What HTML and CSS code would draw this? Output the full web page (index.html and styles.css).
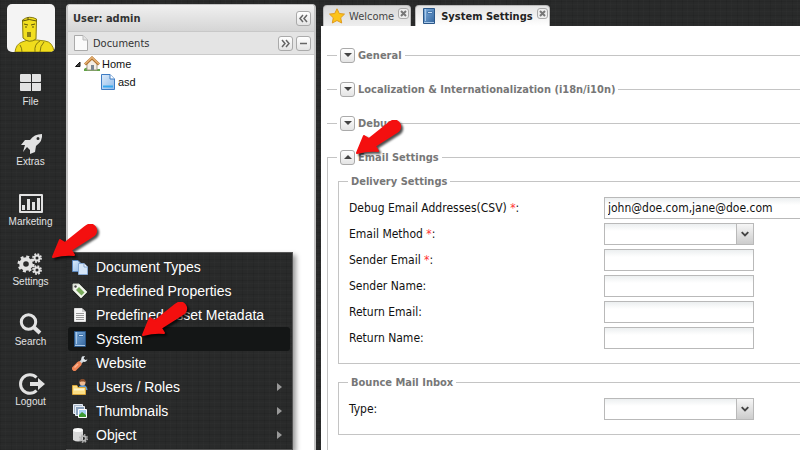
FILE: index.html
```html
<!DOCTYPE html>
<html lang="en">
<head>
    <meta charset="UTF-8">
    <meta name="viewport" content="width=device-width, initial-scale=1.0">
    <title>System Settings</title>
    <link rel="stylesheet" href="styles.css">
</head>
<body>

<svg class="defs" aria-hidden="true">
    <defs>
        <linearGradient id="blue" x1="0" y1="0" x2="1" y2="1">
            <stop offset="0" stop-color="#dcebfa"/>
            <stop offset="1" stop-color="#8fb9e8"/>
        </linearGradient>
        <linearGradient id="book" x1="0" y1="0" x2="1" y2="1">
            <stop offset="0" stop-color="#7fb0e0"/>
            <stop offset="1" stop-color="#33649c"/>
        </linearGradient>
    </defs>
    <symbol id="arrow" viewBox="0 0 52 44">
        <path d="M2 33L9 16L14 19L34 3Q40 -2 44 3Q47 8 42 12L20 26L23 31Q13 30 2 33Z" stroke="#f40f0f" stroke-width="2" stroke-linejoin="round"/>
    </symbol>
    <symbol id="icon-book" viewBox="0 0 16 16">
        <path d="M2.500 .5H13.500V15.500H2.500Z" fill="url(#book)" stroke="#2b5788"/>
        <path d="M4.500 1V13M3 14.500H13" stroke="#a9c8e8" fill="none"/>
        <path d="M6.500 3.500H11.500V5.500H6.500Z" fill="#c9dff5" stroke="#4577ad"/>
    </symbol>
</svg>

<div class="app">
    <!-- Main navigation -->
    <nav class="sidebar">
        <a class="logo" href="#" aria-label="Home">
            <svg viewBox="0 0 48 48" width="48" height="48">
                <path d="M8 48Q9 40 15 38L21 36H30L38 37Q46 38 47 48Z" fill="#f0dc1c" stroke="#9a8c10"/>
                <path d="M15.500 16Q22 11 29.500 15L29 35Q22 40 16 34Z" fill="#f2df20" stroke="#84780e"/>
                <path d="M15.500 17Q22 14 29.500 17M21 13V16M17 20L21 21M24 21L28 20" stroke="#5d550c" fill="none"/>
                <path d="M18 23H20M25 23H27" stroke="#5d550c"/>
                <path d="M20 28H24V33H20Z" fill="#8b7f16"/>
                <path d="M28 48Q27 40 33 37M15 48Q15 44 13 41M33 48Q33 42 37 38" stroke="#84780e" fill="none"/>
            </svg>
        </a>
        <a class="nav-item" href="#">
            <svg viewBox="0 0 26 22" width="26" height="22"><path d="M3 1H12Q13 1 13 2V9H3Q2 9 2 8V2Q2 1 3 1ZM14 1H22Q23 1 23 2V8Q23 9 22 9H14ZM2 10H13V18H3Q2 18 2 17ZM14 10H23V17Q23 18 22 18H14Z"/></svg>
            File
        </a>
        <a class="nav-item" href="#">
            <svg viewBox="0 0 26 22" width="26" height="22"><path fill-rule="evenodd" d="M24 1Q25 8 18 13L17 19L12 21V17L9 14L5 19Q6 15 7 12H3L7 7H12Q16 1 24 1ZM20 4A1.500 1.500 0 1 0 20 7A1.500 1.500 0 1 0 20 4Z"/></svg>
            Extras
        </a>
        <a class="nav-item" href="#">
            <svg viewBox="0 0 26 22" width="26" height="22"><path fill-rule="evenodd" d="M2 1H24Q25 1 25 2V19Q25 20 24 20H2Q1 20 1 19V2Q1 1 2 1ZM3 3V18H23V3Z"/><path d="M4 12H7V17H4ZM9 6H12V17H9ZM14 9H17V17H14ZM19 5H22V17H19Z"/></svg>
            Marketing
        </a>
        <a class="nav-item" href="#">
            <svg viewBox="0 0 26 22" width="26" height="22">
                <g fill="none" stroke="#e2e2e2">
                    <circle cx="9" cy="11" r="4.800" stroke-width="4"/>
                    <circle cx="9" cy="11" r="7.300" stroke-width="2.400" stroke-dasharray="3 2.730"/>
                    <circle cx="20" cy="5" r="2.500" stroke-width="2"/>
                    <circle cx="20" cy="5" r="4" stroke-width="1.800" stroke-dasharray="1.800 1.340"/>
                    <circle cx="20" cy="17" r="2.500" stroke-width="2"/>
                    <circle cx="20" cy="17" r="4" stroke-width="1.800" stroke-dasharray="1.800 1.340"/>
                </g>
            </svg>
            Settings
        </a>
        <a class="nav-item" href="#">
            <svg viewBox="0 0 26 22" width="26" height="22"><g fill="none" stroke="#e2e2e2"><circle cx="10.500" cy="9" r="7.200" stroke-width="3"/><path d="M15.500 14L22 20" stroke-width="4"/></g></svg>
            Search
        </a>
        <a class="nav-item" href="#">
            <svg viewBox="0 0 26 22" width="26" height="22"><path d="M18.500 4.500A9.300 9.300 0 1 0 18.500 17.500" fill="none" stroke="#e2e2e2" stroke-width="3"/><path d="M12 9H20V5L27 11L20 17V13H12Z"/></svg>
            Logout
        </a>
    </nav>

    <!-- Document tree -->
    <aside class="tree-panel">
        <header class="panel-header">
            <h2>User: admin</h2>
            <button class="tool" aria-label="Collapse"><svg viewBox="0 0 13 13" width="13" height="13"><path d="M6 3L3 6.500L6 10M10 3L7 6.500L10 10"/></svg></button>
        </header>
        <div class="panel-subheader">
            <svg viewBox="0 0 16 16" width="16" height="16"><path d="M1.500 .5H10L14.500 5V15.500H1.500Z" fill="#fafafa" stroke="#aaa"/><path d="M10 .5V5H14.500" fill="#e4e4e4" stroke="#bbb"/></svg>
            <h3>Documents</h3>
            <button class="tool" aria-label="Move right"><svg viewBox="0 0 13 13" width="13" height="13"><path d="M3 3L6 6.500L3 10M7 3L10 6.500L7 10"/></svg></button>
            <button class="tool" aria-label="Minimize"><svg viewBox="0 0 13 13" width="13" height="13"><path d="M3 6.500H10"/></svg></button>
        </div>
        <ul class="tree">
            <li>
                <svg viewBox="0 0 8 8" width="8" height="8"><path d="M6 2V6.500H1.500Z" fill="#444" stroke="#111"/></svg>
                <svg viewBox="0 0 16 16" width="16" height="16">
                    <path d="M0 13Q3 10 5 13H16V15H0Z" fill="#62a347"/>
                    <path d="M3 7L8 3L13 7V14H3Z" fill="#f4eee4" stroke="#a39a8b"/>
                    <path d="M7 9H10V14H7Z" fill="#7d8792"/>
                    <path d="M1 8.500L8 2L15 8.500" fill="none" stroke="#b0722f" stroke-width="3"/>
                    <path d="M1 8L8 1.500L15 8" fill="none" stroke="#e6b274" stroke-width="1.500"/>
                </svg>
                <a href="#">Home</a>
            </li>
            <li class="child">
                <svg viewBox="0 0 16 16" width="16" height="16"><path d="M1.500 .5H10L14.500 5V15.500H1.500Z" fill="url(#blue)" stroke="#3f7cc4"/><path d="M10 .5V5H14.500" fill="#fff" stroke="#3f7cc4"/><path d="M3 12.500H13" stroke="#38a8ef" stroke-width="2"/></svg>
                <a href="#">asd</a>
            </li>
        </ul>
    </aside>

    <!-- Settings tab -->
    <main class="workspace">
        <div class="tabs">
            <div class="tab">
                <svg viewBox="0 0 16 16" width="16" height="16"><path d="M8 .8L10.300 5.500L15.500 6.100L11.700 9.800L12.700 15L8 12.500L3.300 15L4.300 9.800L.5 6.100L5.700 5.500Z" fill="#fcc419" stroke="#e09a1c"/></svg>
                <a href="#">Welcome</a>
                <button class="tab-close" aria-label="Close Welcome"><svg viewBox="0 0 7 7" width="7" height="7"><path d="M1 1L6 6M6 1L1 6"/></svg></button>
            </div>
            <div class="tab active">
                <svg width="16" height="16"><use href="#icon-book"/></svg>
                <a href="#">System Settings</a>
                <button class="tab-close" aria-label="Close System Settings"><svg viewBox="0 0 7 7" width="7" height="7"><path d="M1 1L6 6M6 1L1 6"/></svg></button>
            </div>
        </div>

        <form class="settings">
            <fieldset class="section">
                <legend><button type="button" class="toggle" aria-label="Expand General"></button>General</legend>
            </fieldset>
            <fieldset class="section">
                <legend><button type="button" class="toggle" aria-label="Expand Localization"></button>Localization &amp; Internationalization (i18n/i10n)</legend>
            </fieldset>
            <fieldset class="section">
                <legend><button type="button" class="toggle" aria-label="Expand Debug"></button>Debug</legend>
            </fieldset>
            <fieldset class="section open">
                <legend><button type="button" class="toggle" aria-label="Collapse Email Settings"></button>Email Settings</legend>

                <fieldset class="group">
                    <legend>Delivery Settings</legend>
                    <div class="field">
                        <label for="debug-email">Debug Email Addresses(CSV) <em>*</em>:</label>
                        <input class="wide" type="text" id="debug-email" value="john@doe.com,jane@doe.com">
                    </div>
                    <div class="field">
                        <label for="method">Email Method <em>*</em>:</label>
                        <div class="combo">
                            <select id="method"><option></option></select>
                            <svg viewBox="0 0 17 20" width="17" height="20"><path d="M5 8L8.500 11.500L12 8"/></svg>
                        </div>
                    </div>
                    <div class="field">
                        <label for="sender-email">Sender Email <em>*</em>:</label>
                        <input type="text" id="sender-email">
                    </div>
                    <div class="field">
                        <label for="sender-name">Sender Name:</label>
                        <input type="text" id="sender-name">
                    </div>
                    <div class="field">
                        <label for="return-email">Return Email:</label>
                        <input type="text" id="return-email">
                    </div>
                    <div class="field">
                        <label for="return-name">Return Name:</label>
                        <input type="text" id="return-name">
                    </div>
                </fieldset>

                <fieldset class="group">
                    <legend>Bounce Mail Inbox</legend>
                    <div class="field">
                        <label for="bounce-type">Type:</label>
                        <div class="combo">
                            <select id="bounce-type"><option></option></select>
                            <svg viewBox="0 0 17 20" width="17" height="20"><path d="M5 8L8.500 11.500L12 8"/></svg>
                        </div>
                    </div>
                </fieldset>
            </fieldset>
        </form>
    </main>
</div>

<!-- Settings menu -->
<ul class="menu">
    <li><a href="#">
        <svg viewBox="0 0 16 16" width="16" height="16"><path d="M.5 1.500H6L9.500 5V12.500H.5Z" fill="url(#blue)" stroke="#5b87bd"/><path d="M6.500 4.500H12L15.500 8V15.500H6.500Z" fill="#d5e6f8" stroke="#86a9d4"/><path d="M12 4.500V8H15.500" fill="#fff" stroke="#86a9d4"/></svg>
        <span>Document Types</span></a></li>
    <li><a href="#">
        <svg viewBox="0 0 16 16" width="16" height="16"><path d="M1 1H7L15 9L9 15L1 7Z" fill="#f2f5ee" stroke="#ccd3c5"/><path d="M7 4L12.500 9.500L9.500 12.500L4 7Z" fill="#7aab5c"/><circle cx="3.500" cy="3.500" r="1.200" fill="#444"/></svg>
        <span>Predefined Properties</span></a></li>
    <li><a href="#">
        <svg viewBox="0 0 16 16" width="16" height="16"><path d="M2.500 1.500H10L13.500 5V14.500H2.500Z" fill="#f6f6f6" stroke="#ddd"/><path d="M4 6.500H12M4 8.500H12M4 10.500H12M4 12.500H12" stroke="#999"/><path d="M10 1.500V5H13.500" fill="#ccc"/></svg>
        <span>Predefined Asset Metadata</span></a></li>
    <li class="selected"><a href="#">
        <svg width="16" height="16"><use href="#icon-book"/></svg>
        <span>System</span></a></li>
    <li><a href="#">
        <svg viewBox="0 0 16 16" width="16" height="16"><path d="M7 9L12 4" stroke="#cdd4da" stroke-width="3"/><path d="M10 1.500Q8 5 11 6.500Q14 8 15.500 4.500L13 5L11.500 3.500L13 1Z" fill="#dfe5ea"/><path d="M2.500 13.500L7 9" stroke="#f08455" stroke-width="5" stroke-linecap="round"/><path d="M2.500 12.500L6 9" stroke="#fbb797" stroke-width="1.500"/></svg>
        <span>Website</span></a></li>
    <li><a href="#">
        <svg viewBox="0 0 16 16" width="16" height="16"><path d="M6 11Q6 6 11 6Q15 6 15.500 11Z" fill="#5d9bd8"/><circle cx="10.500" cy="3.500" r="3" fill="#f1bd92"/><path d="M7.500 3.500Q7 0 10.500 0Q14 0 13.500 3.500L12 2.500H9Z" fill="#8a4c28"/><path d="M.5 6.500H5L6 8.500H13.500V15.500H.5Z" fill="#fbdf86" stroke="#d9a53a"/><path d="M2 10.500H12" stroke="#fff4c9" stroke-width="2"/></svg>
        <span>Users / Roles</span><i class="more"></i></a></li>
    <li><a href="#">
        <svg viewBox="0 0 16 16" width="16" height="16"><path d="M1.500 1.500H10.500V10.500H1.500Z" fill="#a8b8cc" stroke="#e8eef5"/><path d="M3.500 3.500H12.500V12.500H3.500Z" fill="#8ba2bd" stroke="#e8eef5"/><path d="M6.500 6.500H14.500V14.500H6.500Z" fill="#a7cff2" stroke="#fff"/><path d="M7 14V12L10 9L14 12V14Z" fill="#3f9b35"/></svg>
        <span>Thumbnails</span><i class="more"></i></a></li>
    <li><a href="#">
        <svg viewBox="0 0 16 16" width="16" height="16"><path d="M1 3V13Q6 16 11 13V3Z" fill="#d8d8d8"/><ellipse cx="6" cy="3" rx="5" ry="2" fill="#fafafa"/><circle cx="11.500" cy="11.500" r="2.300" fill="none" stroke="#b5b5b5" stroke-width="1.800"/><circle cx="11.500" cy="11.500" r="3.800" fill="none" stroke="#b5b5b5" stroke-width="1.400" stroke-dasharray="1.600 1.380"/></svg>
        <span>Object</span><i class="more"></i></a></li>
</ul>

<!-- Pointers to the three steps -->
<svg class="pointer step-settings" width="52" height="44"><use href="#arrow"/></svg>
<svg class="pointer step-system" width="52" height="44"><use href="#arrow"/></svg>
<svg class="pointer step-email" width="52" height="44"><use href="#arrow"/></svg>

</body>
</html>
```
FILE: styles.css
```css
* {
    box-sizing: border-box;
}
body {
    margin: 0;
    height: 100vh;
    overflow: hidden;
    position: relative;
    font-family: Tahoma, "DejaVu Sans Condensed", "DejaVu Sans", sans-serif;
    font-size: 12px;
    color: #111;
}
body, .menu {
    background-color: #292a2a;
    background-image:
        repeating-linear-gradient(90deg, rgba(0, 0, 0, 0.08) 0 1px, transparent 1px 5px, rgba(255, 255, 255, 0.01) 5px 6px, transparent 6px 11px),
        repeating-linear-gradient(0deg, rgba(0, 0, 0, 0.08) 0 1px, transparent 1px 4px, rgba(255, 255, 255, 0.01) 4px 5px, transparent 5px 7px);
}
a {
    color: inherit;
    text-decoration: none;
}
button {
    padding: 0;
    cursor: pointer;
}
ul {
    list-style: none;
    margin: 0;
    padding: 0;
}
svg {
    display: block;
    flex: none;
}
.defs {
    position: absolute;
    width: 0;
    height: 0;
}
.app {
    display: flex;
    height: 100%;
}

/* Sidebar */
.sidebar {
    width: 66px;
    flex: none;
    padding: 4px 5px 0 0;
    display: flex;
    flex-direction: column;
    align-items: center;
}
.logo {
    background: #f4f4f4;
    border-radius: 5px;
    overflow: hidden;
    margin-bottom: 21px;
}
.nav-item {
    height: 60px;
    font: 10px/14px "Liberation Sans", Arial, sans-serif;
    color: #e2e2e2;
    display: flex;
    flex-direction: column;
    align-items: center;
}
.nav-item svg {
    fill: #e2e2e2;
    overflow: visible;
}

/* Tree panel */
.tree-panel {
    width: 250px;
    flex: none;
    margin: 4px 5px 0 0;
    background: #fff;
    border: 2px solid #c4c4c4;
    border-top-width: 1px;
    border-bottom: 0;
    border-radius: 4px 4px 0 0;
}
.panel-header, .panel-subheader {
    display: flex;
    align-items: center;
    gap: 3px;
    padding: 0 3px 0 5px;
}
.panel-header {
    height: 27px;
    background: linear-gradient(#f0f0f0, #d5d5d5);
    border-bottom: 1px solid #c8c8c8;
    border-radius: 3px 3px 0 0;
}
.panel-subheader {
    height: 23px;
    background: #e4e4e4;
    border-bottom: 1px solid #cbcbcb;
}
.panel-header h2, .panel-subheader h3 {
    flex: 1;
    margin: 0;
    font-size: 11px;
    color: #333;
}
.panel-subheader h3 {
    font-weight: normal;
    margin-left: 1px;
}
.tool {
    width: 15px;
    height: 15px;
    border: 1px solid #aaa;
    border-radius: 3px;
    background: linear-gradient(#fff, #e4e4e4);
}
.tool path {
    fill: none;
    stroke: #666;
    stroke-width: 1.5;
}
.tree li {
    display: flex;
    align-items: center;
    gap: 2px;
    height: 18px;
    padding-left: 6px;
    font: 11px "Liberation Sans", Arial, sans-serif;
}
.tree .child {
    padding-left: 32px;
}

/* Tabs */
.workspace {
    flex: 1;
    min-width: 0;
    display: flex;
    flex-direction: column;
    overflow: hidden;
}
.tabs {
    display: flex;
    gap: 4px;
    padding: 5px 0 0 2px;
}
.tab {
    height: 21px;
    display: flex;
    align-items: center;
    gap: 4px;
    padding: 0 1px 0 5px;
    font-size: 11px;
    color: #444;
    background: linear-gradient(#d8d8d8, #eee);
    border: 1px solid #bbb;
    border-bottom: 0;
    border-radius: 4px 4px 0 0;
}
.tab.active {
    font-weight: bold;
    color: #222;
    background: linear-gradient(#e4e4e4, #fff);
}
.tab-close {
    align-self: flex-start;
    margin-top: 2px;
    width: 11px;
    height: 11px;
    display: grid;
    place-items: center;
    border: 1px solid #aaa;
    border-radius: 3px;
    background: #eee;
}
.tab-close path {
    stroke: #777;
    stroke-width: 2;
}

/* Settings form */
.settings {
    flex: 1;
    min-width: 520px;
    padding: 21px 0 0 6px;
    background: #fff;
    overflow: hidden;
}
fieldset {
    margin: 0;
    padding: 0;
    min-width: 0;
    border: 1px solid #c4c4c4;
}
legend {
    height: 16px;
    margin-left: 10px;
    padding: 0 3px;
    display: flex;
    align-items: center;
    gap: 3px;
    font-size: 11px;
    font-weight: bold;
    color: #777;
}
.section {
    border-width: 1px 0 0;
    margin-bottom: 18px;
}
.section.open {
    border-width: 1px;
    padding: 8px 10px 20px;
}
.section.open > legend {
    margin-left: -1px;
}
.toggle {
    width: 15px;
    height: 15px;
    display: grid;
    place-items: center;
    border: 1px solid #aaa;
    border-radius: 3px;
    background: linear-gradient(#fff, #e4e4e4);
}
.toggle::before {
    content: "";
    border: 4px solid transparent;
    border-top-color: #444;
    border-bottom-width: 0;
}
.open .toggle::before {
    border-top-width: 0;
    border-bottom: 4px solid #444;
}
.group {
    padding: 8px 10px 10px;
    margin-bottom: 10px;
}
.group legend {
    margin-left: -1px;
}
.field {
    display: flex;
    margin-bottom: 4px;
}
.field label {
    width: 255px;
    flex: none;
    line-height: 22px;
}
.field em {
    color: #f33;
    font-style: normal;
}
input, select {
    width: 150px;
    height: 22px;
    padding: 0 3px;
    font: inherit;
    color: #111;
    border: 1px solid #b9b9b9;
    border-radius: 0;
    background: linear-gradient(#eceff0, #fff 7px);
}
.wide {
    width: 300px;
}
.combo {
    display: grid;
}
.combo > * {
    grid-area: 1 / 1;
}
.combo select {
    appearance: none;
}
.combo svg {
    justify-self: end;
    align-self: center;
    margin-right: 1px;
    pointer-events: none;
    background: linear-gradient(#f6f6f6, #ccc);
    border-left: 1px solid #b9b9b9;
}
.combo path {
    fill: none;
    stroke: #444;
    stroke-width: 2;
}

/* Popup menu */
.menu {
    position: absolute;
    left: 66px;
    top: 252px;
    width: 227px;
    padding: 2px;
    border: 1px solid #555;
    border-left: 0;
    box-shadow: 3px 3px 5px rgba(0, 0, 0, 0.4);
    font: 14px "Liberation Sans", Arial, sans-serif;
    color: #fff;
}
.menu a {
    display: flex;
    align-items: center;
    gap: 8px;
    height: 24px;
    padding: 0 8px 0 4px;
    border-radius: 3px;
}
.menu span {
    flex: 1;
}
.menu .selected a {
    background: #141616;
}
.more {
    border: 4px solid transparent;
    border-left: 5px solid #999;
    border-right: 0;
}

/* Red pointers */
.pointer {
    position: absolute;
    fill: #f40f0f;
    overflow: visible;
    pointer-events: none;
    filter: drop-shadow(2px 2px 1px rgba(0, 0, 0, 0.7));
}
.pointer use {
    overflow: visible;
}
.step-settings {
    left: 51px;
    top: 224px;
}
.step-system {
    left: 141px;
    top: 302px;
}
.step-email {
    left: 355px;
    top: 120px;
}
```
